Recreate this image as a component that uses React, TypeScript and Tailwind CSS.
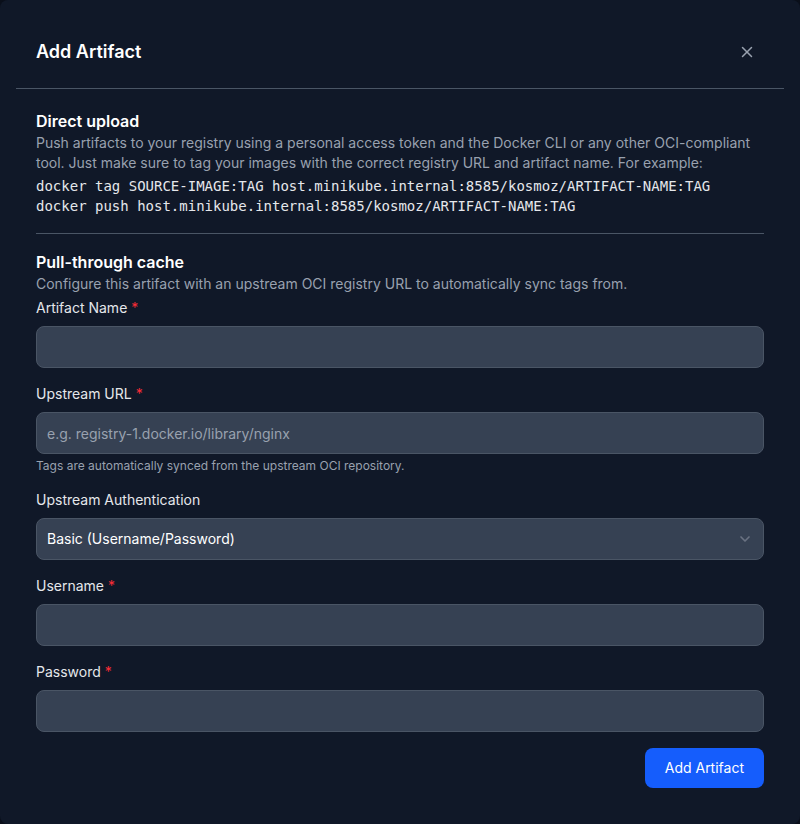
import React from "react";

function Label({ text, required }: { text: string; required?: boolean }) {
  return (
    <label className="block text-sm leading-5 text-gray-200 mb-2">
      {text}
      {required && <span className="text-red-500 ml-1">*</span>}
    </label>
  );
}

function Input({ placeholder }: { placeholder?: string }) {
  return (
    <input
      className="block w-full h-[42px] rounded-lg border border-gray-600 bg-gray-700 px-[10px] text-sm text-white placeholder:text-gray-400 outline-none"
      placeholder={placeholder}
    />
  );
}

export default function App() {
  return (
    <div className="w-[800px] h-[824px] bg-[#0a0f1a]" style={{ fontFamily: "Inter, 'Noto Sans', sans-serif" }}>
      <div className="w-full h-full rounded-lg bg-gray-900 flex flex-col">
        <div className="mx-4 flex items-center justify-between border-b border-gray-600 pl-5 pr-[28px] pt-[38px] pb-[22px]">
          <h2 className="text-lg leading-7 font-semibold text-white">Add Artifact</h2>
          <button className="text-gray-400">
            <svg width="18" height="18" viewBox="0 0 24 24" fill="none" stroke="currentColor" strokeWidth="2" strokeLinecap="round">
              <path d="M18 6 6 18" />
              <path d="m6 6 12 12" />
            </svg>
          </button>
        </div>
        <div className="px-9 pt-5">
          <h3 className="text-base leading-6 font-semibold text-white">Direct upload</h3>
          <p className="text-sm leading-5 text-gray-400">
            Push artifacts to your registry using a personal access token and the Docker CLI or any other OCI-compliant tool. Just make sure to tag your images with the correct registry URL and artifact name. For example:
          </p>
          <pre
            className="mt-[3px] text-sm leading-5 text-gray-200"
            style={{ fontFamily: "'DejaVu Sans Mono', monospace" }}
          >
{`docker tag SOURCE-IMAGE:TAG host.minikube.internal:8585/kosmoz/ARTIFACT-NAME:TAG
docker push host.minikube.internal:8585/kosmoz/ARTIFACT-NAME:TAG`}
          </pre>
          <div className="mt-[17px] border-t border-gray-600" />
          <h3 className="mt-4 text-base leading-6 font-semibold text-white">Pull-through cache</h3>
          <p className="text-sm leading-5 text-gray-400">
            Configure this artifact with an upstream OCI registry URL to automatically sync tags from.
          </p>
          <div className="mt-[4px] flex flex-col gap-4">
            <div>
              <Label text="Artifact Name" required />
              <Input />
            </div>
            <div>
              <Label text="Upstream URL" required />
              <Input placeholder="e.g. registry-1.docker.io/library/nginx" />
              <p className="mt-1 text-xs leading-4 text-gray-400">
                Tags are automatically synced from the upstream OCI repository.
              </p>
            </div>
            <div>
              <Label text="Upstream Authentication" />
              <div className="flex h-[42px] w-full items-center justify-between rounded-lg border border-gray-600 bg-gray-700 pl-[10px] pr-[10px] text-sm text-white">
                <span>Basic (Username/Password)</span>
                <svg width="16" height="16" viewBox="0 0 24 24" fill="none" stroke="#6a7282" strokeWidth="2.5" strokeLinecap="round" strokeLinejoin="round">
                  <path d="m6 9 6 6 6-6" />
                </svg>
              </div>
            </div>
            <div>
              <Label text="Username" required />
              <Input />
            </div>
            <div>
              <Label text="Password" required />
              <Input />
            </div>
          </div>
          <div className="mt-4 flex justify-end">
            <button className="h-10 rounded-lg bg-[#155dfc] px-5 text-sm font-normal text-white">
              Add Artifact
            </button>
          </div>
        </div>
      </div>
    </div>
  );
}
